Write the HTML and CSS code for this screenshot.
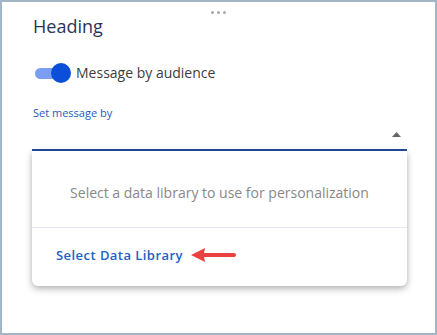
FILE: index.html
```html
<!DOCTYPE html>
<html>
<head>
<meta charset="utf-8">
<link rel="stylesheet" href="styles.css">
</head>
<body>
<div class="frame">
  <div class="handle"><span></span><span></span><span></span></div>
  <h1 class="heading">Heading</h1>
  <div class="toggle-row">
    <div class="toggle"><div class="track"></div><div class="knob"></div></div>
    <span class="toggle-label">Message by audience</span>
  </div>
  <div class="field-label">Set message by</div>
  <div class="field">
    <svg class="caret" width="9" height="5" viewBox="0 0 9 5"><path d="M0 5 L4.5 0 L9 5 Z" fill="#666"/></svg>
  </div>
  <div class="panel">
    <div class="panel-msg">Select a data library to use for personalization</div>
    <div class="panel-action">
      <span class="link">Select Data Library</span>
      <svg class="arrow" width="46" height="14" viewBox="0 0 46 14"><path d="M0 7 L14 0 L13 5 L43 5 Q45 5 45 7 Q45 9 43 9 L13 9 L14 14 Z" fill="#e8413f"/></svg>
    </div>
  </div>
</div>
</body>
</html>
```
FILE: styles.css
```css
html, body { margin: 0; padding: 0; background: #fff; }
body { font-family: "Open Sans", "Noto Sans", sans-serif; }
.frame {
  position: relative;
  width: 437px; height: 335px;
  box-sizing: border-box;
  border: 2px solid #a2b6c6;
  padding: 12px 28px 0 30px;
  display: flex; flex-direction: column;
}
.handle {
  position: absolute; top: 9px; left: 0; right: 0;
  display: flex; justify-content: center; gap: 3px;
}
.handle span { width: 3px; height: 3px; border-radius: 50%; background: #a9a9a9; }
.heading {
  margin: 0 0 0 1px;
  font-size: 18px; line-height: 24px; font-weight: 400;
  color: #2a3556;
}
.toggle-row {
  margin-top: 24px;
  display: flex; align-items: center; height: 22px;
}
.toggle { position: relative; width: 36px; height: 20px; margin-left: 3px; margin-right: 5px; }
.track { position: absolute; left: 0; top: 5px; width: 30px; height: 11px; border-radius: 6px; background: #7a9ef2; }
.knob { position: absolute; right: 0; top: 0; width: 20px; height: 20px; border-radius: 50%; background: #0b4fd9; }
.toggle-label { font-size: 14px; color: #3d3d3d; line-height: 20px; }
.field-label {
  margin-top: 22px;
  font-size: 11px; line-height: 14px; color: #1f5bbf; margin-left: 1px;
}
.field {
  height: 29px;
  border-bottom: 2px solid #1e4f9c;
  display: flex; justify-content: flex-end; align-items: center;
  padding-right: 6px;
}
.caret { margin-top: -1px; }
.panel {
  height: 135px;
  background: #fff;
  border-radius: 0 0 6px 6px;
  box-shadow: 0 3px 7px rgba(0,0,0,0.28), 0 0 4px rgba(0,0,0,0.08);
  display: flex; flex-direction: column;
}
.panel-msg {
  height: 77px; box-sizing: border-box;
  padding-top: 32px;
  border-bottom: 1px solid #e4e8f0;
  text-align: center;
  font-size: 14px; line-height: 20px; color: #888;
}
.panel-action {
  flex: 1;
  display: flex; align-items: center;
  padding-left: 24px;
  padding-bottom: 5px;
  gap: 8px;
}
.link { font-size: 13px; font-weight: 600; color: #2360c4; letter-spacing: 0.45px; line-height: 18px; }
.arrow { margin-top: 1px; }
```
